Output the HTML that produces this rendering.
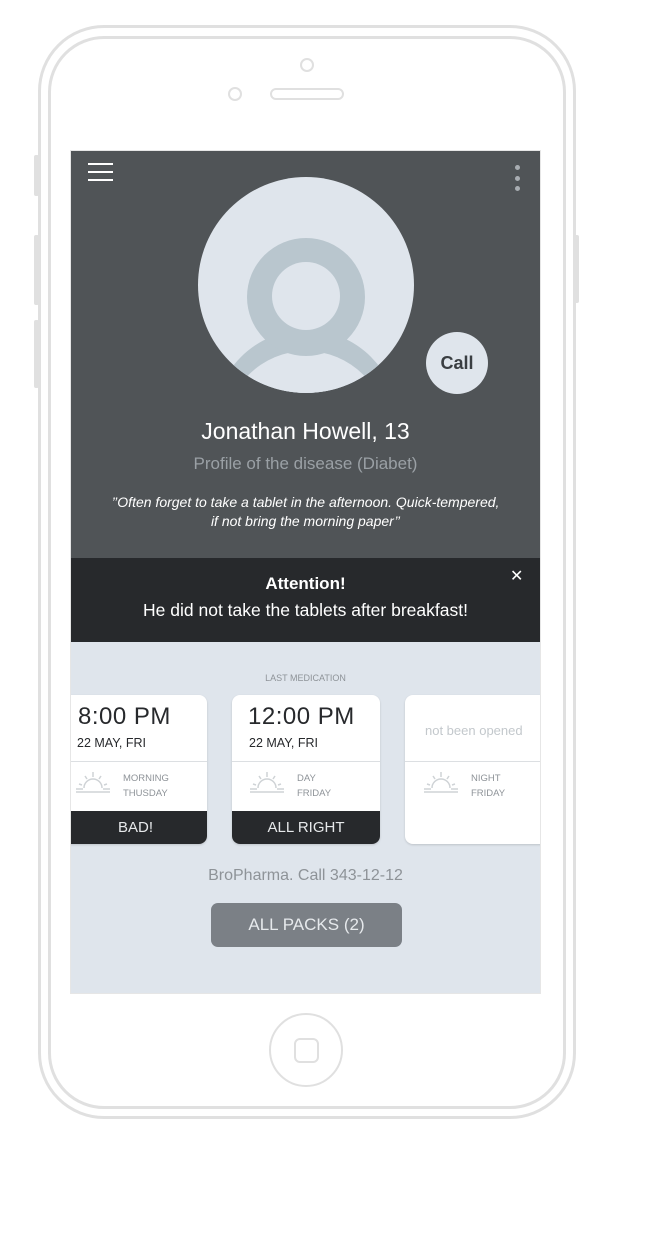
<!DOCTYPE html>
<html><head><meta charset="utf-8"><style>
*{margin:0;padding:0;box-sizing:border-box}
body{width:646px;height:1260px;background:#fff;position:relative;overflow:hidden;font-family:"Liberation Sans",sans-serif}
.a{position:absolute}
.c{text-align:center;left:71px;width:469px}
.card{position:absolute;top:695px;height:149px;background:#fff;border-radius:8px;overflow:hidden;box-shadow:0 1px 2px rgba(0,0,0,.15)}
.t{position:absolute;top:8px;font-size:24px;color:#27292c;letter-spacing:.5px}
.d{position:absolute;top:41px;font-size:12.5px;color:#27292c}
.hr{position:absolute;left:0;right:0;top:66px;height:1px;background:#dcdfe2}
.l{position:absolute;top:76px;font-size:9.5px;line-height:15px;color:#8e9398}
.f{position:absolute;left:0;right:0;bottom:0;height:33px;background:#27292c;color:#e6e8ea;font-size:15px;text-align:center;line-height:34px}
.sun{position:absolute;top:77px}
</style></head><body>
<div class="a" style="left:38px;top:25px;width:538px;height:1094px;border:3px solid #e0e0e0;border-radius:66px"></div>
<div class="a" style="left:48px;top:36px;width:518px;height:1073px;border:3px solid #e0e0e0;border-radius:56px"></div>
<div class="a" style="left:34px;top:155px;width:5px;height:41px;background:#e0e0e0;border-radius:2px"></div>
<div class="a" style="left:34px;top:235px;width:5px;height:70px;background:#e0e0e0;border-radius:2px"></div>
<div class="a" style="left:34px;top:320px;width:5px;height:68px;background:#e0e0e0;border-radius:2px"></div>
<div class="a" style="left:574px;top:235px;width:5px;height:68px;background:#e0e0e0;border-radius:2px"></div>
<div class="a" style="left:300px;top:58px;width:14px;height:14px;border:2px solid #e0e0e0;border-radius:50%"></div>
<div class="a" style="left:228px;top:87px;width:14px;height:14px;border:2px solid #e0e0e0;border-radius:50%"></div>
<div class="a" style="left:270px;top:88px;width:74px;height:12px;border:2px solid #e0e0e0;border-radius:6px"></div>
<div class="a" style="left:269px;top:1013px;width:74px;height:74px;border:2px solid #e0e0e0;border-radius:50%"></div>
<div class="a" style="left:294px;top:1038px;width:25px;height:25px;border:2px solid #e0e0e0;border-radius:6px"></div>
<div class="a" style="left:70px;top:150px;width:471px;height:844px;border:1px solid #e6e6e6"></div>
<div class="a" style="left:71px;top:151px;width:469px;height:407px;background:#505457"></div>
<div class="a" style="left:71px;top:558px;width:469px;height:84px;background:#27292c"></div>
<div class="a" style="left:71px;top:642px;width:469px;height:351px;background:#dfe5ec;overflow:hidden">
<div class="card" style="left:-7px;top:53px;width:143px">
<div class="t" style="left:14px">8:00 PM</div><div class="d" style="left:13px">22 MAY, FRI</div><div class="hr"></div>
<svg class="sun" style="left:11px" width="36" height="22"><use href="#sun"/></svg>
<div class="l" style="left:59px">MORNING<br>THUSDAY</div><div class="f">BAD!</div></div>
<div class="card" style="left:161px;top:53px;width:148px">
<div class="t" style="left:16px">12:00 PM</div><div class="d" style="left:17px">22 MAY, FRI</div><div class="hr"></div>
<svg class="sun" style="left:17px" width="36" height="22"><use href="#sun"/></svg>
<div class="l" style="left:65px">DAY<br>FRIDAY</div><div class="f">ALL RIGHT</div></div>
<div class="card" style="left:334px;top:53px;width:150px">
<div class="a" style="left:20px;top:28px;font-size:13px;color:#c3c8cc;white-space:nowrap">not been opened</div><div class="hr"></div>
<svg class="sun" style="left:18px" width="36" height="22"><use href="#sun"/></svg>
<div class="l" style="left:66px">NIGHT<br>FRIDAY</div></div>
</div>
<div class="a" style="left:88px;top:163px;width:25px;height:2px;background:#fff"></div>
<div class="a" style="left:88px;top:171px;width:25px;height:2px;background:#fff"></div>
<div class="a" style="left:88px;top:179px;width:25px;height:2px;background:#fff"></div>
<div class="a" style="left:515px;top:165px;width:5px;height:5px;background:#a8adb2;border-radius:50%"></div>
<div class="a" style="left:515px;top:176px;width:5px;height:5px;background:#a8adb2;border-radius:50%"></div>
<div class="a" style="left:515px;top:186px;width:5px;height:5px;background:#a8adb2;border-radius:50%"></div>
<svg class="a" style="left:198px;top:177px" width="216" height="216" viewBox="198 177 216 216">
<defs><clipPath id="cp"><circle cx="306" cy="285" r="108"/></clipPath></defs>
<circle cx="306" cy="285" r="108" fill="#dfe5ec"/>
<g clip-path="url(#cp)">
<circle cx="306" cy="422" r="92" fill="#b9c6ce"/>
<circle cx="306" cy="432" r="81" fill="#dfe5ec"/>
<circle cx="306" cy="297" r="59" fill="#b9c6ce"/>
<circle cx="306" cy="296" r="34" fill="#dfe5ec"/>
</g></svg>
<div class="a" style="left:426px;top:332px;width:62px;height:62px;border-radius:50%;background:#dfe5ec;text-align:center;line-height:62px;font-size:18px;font-weight:bold;color:#3a3e42">Call</div>
<div class="a c" style="top:418px;font-size:23px;color:#fff">Jonathan Howell, 13</div>
<div class="a c" style="top:454px;font-size:17px;color:#9aa0a5">Profile of the disease (Diabet)</div>
<div class="a c" style="top:493px;font-size:14px;line-height:19px;color:#fff;font-style:italic">’’Often forget to take a tablet in the afternoon. Quick-tempered,<br>if not bring the morning paper’’</div>
<div class="a c" style="top:574px;font-size:17px;font-weight:bold;color:#fff">Attention!</div>
<div class="a c" style="top:600px;font-size:17.5px;color:#fff">He did not take the tablets after breakfast!</div>
<div class="a" style="left:510px;top:566px;font-size:16px;color:#fff">✕</div>
<div class="a c" style="top:673px;font-size:9px;color:#8e9398">LAST MEDICATION</div>
<svg width="0" height="0" style="position:absolute"><defs><g id="sun" stroke="#cfd3d6" stroke-width="1.5" fill="none"><path d="M9 16 A9 9 0 0 1 27 16"/><path d="M1 17H8M28 17H35M1 20H35M18 0V5M10 4l2 3M26 4l-2 3M4 12l3 1M32 12l-3 1"/></g></defs></svg>
<div class="a c" style="top:867px;font-size:16px;color:#8e9398">BroPharma. Call 343-12-12</div>
<div class="a" style="left:211px;top:903px;width:191px;height:44px;border-radius:7px;background:#7b8086;color:#e6e9ec;font-size:17px;text-align:center;line-height:44px">ALL PACKS (2)</div>
</body></html>
